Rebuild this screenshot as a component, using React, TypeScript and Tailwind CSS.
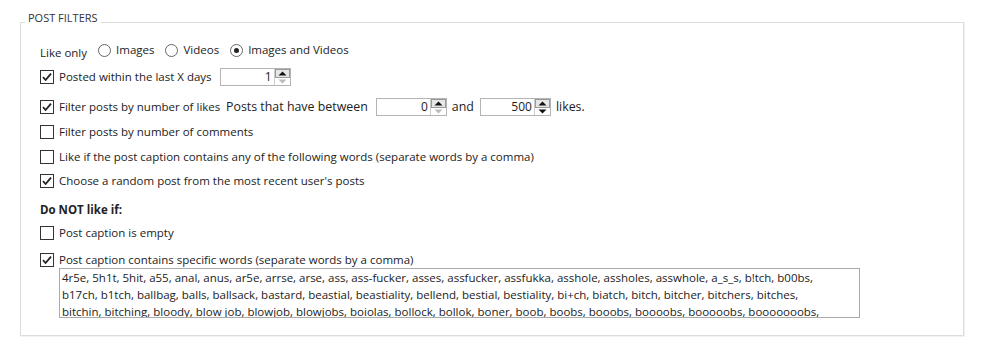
import React from "react";

const Check = ({ checked }: { checked?: boolean }) => (
  <span className="flex h-[14px] w-[14px] shrink-0 items-center justify-center border border-[#333] bg-white">
    {checked && (
      <svg width="12" height="12" viewBox="0 0 12 12">
        <path d="M2 6.2 L4.6 9 L10 2.6" fill="none" stroke="#222" strokeWidth="1.8" />
      </svg>
    )}
  </span>
);

const Radio = ({ checked }: { checked?: boolean }) => (
  <span className="flex h-[13px] w-[13px] shrink-0 items-center justify-center rounded-full border border-[#666] bg-white">
    {checked && <span className="h-[5px] w-[5px] rounded-full bg-[#222]" />}
  </span>
);

const Arrow = ({ up, on }: { up?: boolean; on?: boolean }) => (
  <svg width="9" height="5" viewBox="0 0 9 5">
    <path d={up ? "M0.5 4.5 L4.5 0.5 L8.5 4.5 Z" : "M0.5 0.5 L4.5 4.5 L8.5 0.5 Z"} fill={on ? "#111" : "#bbb"} />
  </svg>
);

const Spin = ({ value, down }: { value: string; down?: boolean }) => (
  <div className="flex h-[18px] w-[71px] items-stretch border border-[#b4b4b4] bg-white text-[12px]">
    <span className="flex flex-1 items-center justify-end pr-[2px]">{value}</span>
    <span className="flex w-[16px] flex-col border-l border-[#ccc]">
      <span className="flex flex-1 items-center justify-center border border-[#999] bg-[#e6e6e6]">
        <Arrow up on />
      </span>
      <span className="flex flex-1 items-center justify-center">
        <Arrow on={down} />
      </span>
    </span>
  </div>
);

const Row = ({ checked, children, className }: { checked?: boolean; children: React.ReactNode; className?: string }) => (
  <div className={`flex h-[16px] items-center gap-[5px] ${className ?? ""}`}>
    <Check checked={checked} />
    {children}
  </div>
);

const lines = [
  "4r5e, 5h1t, 5hit, a55, anal, anus, ar5e, arrse, arse, ass, ass-fucker, asses, assfucker, assfukka, asshole, assholes, asswhole, a_s_s, b!tch, b00bs,",
  "b17ch, b1tch, ballbag, balls, ballsack, bastard, beastial, beastiality, bellend, bestial, bestiality, bi+ch, biatch, bitch, bitcher, bitchers, bitches,",
  "bitchin, bitching, bloody, blow job, blowjob, blowjobs, boiolas, bollock, bollok, boner, boob, boobs, booobs, boooobs, booooobs, booooooobs,",
];

export default function App() {
  return (
    <div className="h-[342px] w-[983px] bg-white pl-[20px] pt-[11px] text-[11.5px] text-[#222] [font-family:'Open_Sans',sans-serif]">
      <fieldset className="h-[325px] w-[944px] border border-[#dcdcdc] shadow-[inset_1px_1px_0_#fff,1px_1px_0_#f2f2f2]">
        <legend className="ml-[4px] px-[3px] pb-[8px] text-[11px] leading-[14px] text-[#333]">POST FILTERS</legend>
        <div className="flex flex-col pl-[19px] leading-[16px]">
          <div className="mt-[9px] flex h-[16px] items-center">
            <span className="mr-[11px] mt-[5px]">Like only</span>
            <Radio />
            <span className="ml-[5px] mr-[11px]">Images</span>
            <Radio />
            <span className="ml-[5px] mr-[11px]">Videos</span>
            <Radio checked />
            <span className="ml-[5px]">Images and Videos</span>
          </div>
          <Row checked className="mt-[11px]">
            <span>Posted within the last X days</span>
            <span className="ml-[3px]">
              <Spin value="1" />
            </span>
          </Row>
          <Row checked className="mt-[14px]">
            <span className="w-[162px] shrink-0 whitespace-nowrap">Filter posts by number of likes</span>
            <span className="whitespace-nowrap text-[12.4px]">Posts that have between</span>
            <span className="ml-[3px]">
              <Spin value="0" />
            </span>
            <span className="text-[12.4px]">and</span>
            <span className="ml-[1px]">
              <Spin value="500" down />
            </span>
            <span className="text-[12.4px]">likes.</span>
          </Row>
          <Row className="mt-[9px]">
            <span>Filter posts by number of comments</span>
          </Row>
          <Row className="mt-[9px]">
            <span>Like if the post caption contains any of the following words (separate words by a comma)</span>
          </Row>
          <Row checked className="mt-[8px]">
            <span>Choose a random post from the most recent user's posts</span>
          </Row>
          <div className="mt-[13px] h-[16px] font-bold">Do NOT like if:</div>
          <Row className="mt-[7px]">
            <span>Post caption is empty</span>
          </Row>
          <Row checked className="mt-[11px]">
            <span>Post caption contains specific words (separate words by a comma)</span>
          </Row>
          <div className="ml-[19px] flex h-[50px] w-[801px] flex-col overflow-hidden border border-[#aaa] px-[2px] leading-[17px]">
            {lines.map((l) => (
              <span key={l} className="whitespace-nowrap">
                {l}
              </span>
            ))}
          </div>
        </div>
      </fieldset>
    </div>
  );
}
